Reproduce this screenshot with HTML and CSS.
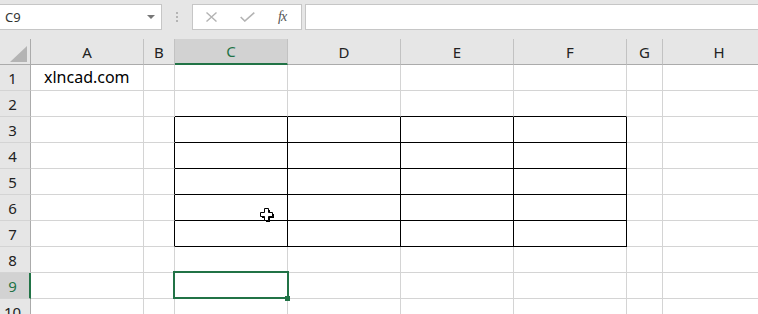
FILE: index.html
```html
<!DOCTYPE html>
<html lang="en">
<head>
    <meta charset="UTF-8">
    <title>Book1 - Excel</title>
    <link rel="stylesheet" href="styles.css">
</head>
<body>
    <!-- name box + formula bar -->
    <div class="toolbar">
        <div class="namebox"><span>C9</span><span class="caret"></span></div>
        <div class="grip"><i></i><i></i><i></i></div>
        <div class="fxbox">
            <svg class="ic-x" width="11" height="10" viewBox="0 0 11 10"><path d="M0.5 0.5 L10.5 9.5 M10.5 0.5 L0.5 9.5" stroke="#b3b3b3" stroke-width="1.4" fill="none"/></svg>
            <svg class="ic-ok" width="15" height="10" viewBox="0 0 15 10"><path d="M0.7 5 L4.8 9 L14.3 0.6" stroke="#b3b3b3" stroke-width="1.6" fill="none"/></svg>
            <span class="fx">fx</span>
        </div>
        <div class="formula"></div>
    </div>

    <div class="sheet">
        <div class="row head">
            <div class="corner"><span class="tri"></span></div>
            <div>A</div><div>B</div><div class="sel">C</div><div>D</div><div>E</div><div>F</div><div>G</div><div>H</div>
        </div>
        <div class="row">
            <div class="rh">1</div><div class="c txt">xlncad.com</div><div class="c"></div><div class="c"></div><div class="c"></div><div class="c"></div><div class="c"></div><div class="c"></div><div class="c"></div>
        </div>
        <div class="row">
            <div class="rh">2</div><div class="c"></div><div class="c"></div><div class="c bt"></div><div class="c bt"></div><div class="c bt"></div><div class="c bt"></div><div class="c"></div><div class="c"></div>
        </div>
        <div class="row">
            <div class="rh">3</div><div class="c"></div><div class="c bl"></div><div class="c bx"></div><div class="c bx"></div><div class="c bx"></div><div class="c bx"></div><div class="c"></div><div class="c"></div>
        </div>
        <div class="row">
            <div class="rh">4</div><div class="c"></div><div class="c bl"></div><div class="c bx"></div><div class="c bx"></div><div class="c bx"></div><div class="c bx"></div><div class="c"></div><div class="c"></div>
        </div>
        <div class="row">
            <div class="rh">5</div><div class="c"></div><div class="c bl"></div><div class="c bx"></div><div class="c bx"></div><div class="c bx"></div><div class="c bx"></div><div class="c"></div><div class="c"></div>
        </div>
        <div class="row">
            <div class="rh">6</div><div class="c"></div><div class="c bl"></div>
            <div class="c bx pointer">
                <svg class="cursor" width="17" height="17" viewBox="0 0 17 17">
                    <path d="M6 2 H10 V6 H14 V10 H10 V14 H6 V10 H2 V6 H6 Z" fill="#000" transform="translate(1 1)"/>
                    <path d="M5.5 1.5 H9.5 V5.5 H13.5 V9.5 H9.5 V13.5 H5.5 V9.5 H1.5 V5.5 H5.5 Z" fill="#fff" stroke="#000" stroke-width="1"/>
                </svg>
            </div>
            <div class="c bx"></div><div class="c bx"></div><div class="c bx"></div><div class="c"></div><div class="c"></div>
        </div>
        <div class="row">
            <div class="rh">7</div><div class="c"></div><div class="c bl"></div><div class="c bx"></div><div class="c bx"></div><div class="c bx"></div><div class="c bx"></div><div class="c"></div><div class="c"></div>
        </div>
        <div class="row">
            <div class="rh">8</div><div class="c"></div><div class="c"></div><div class="c"></div><div class="c"></div><div class="c"></div><div class="c"></div><div class="c"></div><div class="c"></div>
        </div>
        <div class="row">
            <div class="rh sel">9</div><div class="c"></div><div class="c"></div>
            <div class="c cur"><div class="selbox"><span class="handle"></span></div></div>
            <div class="c"></div><div class="c"></div><div class="c"></div><div class="c"></div><div class="c"></div>
        </div>
        <div class="row">
            <div class="rh">10</div><div class="c"></div><div class="c"></div><div class="c"></div><div class="c"></div><div class="c"></div><div class="c"></div><div class="c"></div><div class="c"></div>
        </div>
    </div>
</body>
</html>
```

FILE: styles.css
```css
body {
    margin: 0;
    width: 758px;
    height: 314px;
    overflow: hidden;
    background: #fff;
    font-family: "Noto Sans", "Open Sans", sans-serif;
}

/* top bar */
.toolbar {
    display: flex;
    align-items: flex-start;
    height: 39px;
    padding-top: 4px;
    box-sizing: border-box;
    background: #e6e6e6;
}
.namebox {
    width: 162px;
    height: 26px;
    box-sizing: border-box;
    background: #fff;
    border: 1px solid #c6c6c6;
    border-left: none;
    display: flex;
    align-items: center;
    justify-content: space-between;
    padding: 0 6px 0 5px;
    font-size: 13px;
    color: #333;
}
.caret {
    width: 0;
    height: 0;
    border-left: 4px solid transparent;
    border-right: 4px solid transparent;
    border-top: 4px solid #777;
}
.grip {
    display: flex;
    flex-direction: column;
    gap: 2px;
    margin: 8px 14px 0 14px;
}
.grip i {
    width: 2px;
    height: 2px;
    background: #b4b4b4;
}
.fxbox {
    width: 110px;
    height: 26px;
    box-sizing: border-box;
    background: #fff;
    border: 1px solid #c6c6c6;
    display: flex;
    align-items: center;
    padding-left: 13px;
}
.ic-ok {
    margin-left: 23px;
}
.fx {
    margin-left: 23px;
    font-family: "Liberation Serif", serif;
    font-style: italic;
    font-size: 14px;
    color: #555;
    letter-spacing: -1px;
}
.formula {
    flex: 1;
    height: 26px;
    box-sizing: border-box;
    margin-left: 3px;
    background: #fff;
    border: 1px solid #c6c6c6;
    border-right: none;
}

/* grid */
.sheet {
    overflow: hidden;
}
.row {
    display: grid;
    grid-template-columns: 31px 113px 31px 113px 113px 113px 113px 36px 113px;
    height: 26px;
}
.row > div {
    box-sizing: border-box;
    border-right: 1px solid #d4d4d4;
    border-bottom: 1px solid #d4d4d4;
}
.head {
    background: #e6e6e6;
}
.row.head > div {
    display: flex;
    align-items: center;
    justify-content: center;
    font-size: 15px;
    color: #222;
    border-right-color: #c2c2c2;
    border-bottom-color: #ababab;
}
.row.head > .corner {
    align-items: flex-end;
    justify-content: flex-end;
    padding: 0 3px 2px 0;
    border-right-color: #ababab;
}
.tri {
    width: 0;
    height: 0;
    border-left: 17px solid transparent;
    border-bottom: 16px solid #b4b4b4;
}
.row.head > .sel {
    background: #d2d2d2;
    color: #217346;
    border-bottom: 2px solid #217346;
}
.row > .rh {
    background: #e6e6e6;
    border-right-color: #ababab;
    display: flex;
    align-items: center;
    justify-content: center;
    padding-right: 5px;
    font-size: 15px;
    color: #222;
}
.row > .rh.sel {
    background: #d2d2d2;
    color: #217346;
    border-right: 2px solid #217346;
    padding-right: 4px;
}
.txt {
    padding-left: 13px;
    font-size: 16px;
    line-height: 25px;
    color: #000;
    white-space: nowrap;
}

/* table borders C3:F7 */
.row > .bt {
    border-bottom-color: #000;
}
.row > .bl {
    border-right-color: #000;
}
.row > .bx {
    border-right-color: #000;
    border-bottom-color: #000;
}

/* active cell */
.cur,
.pointer {
    position: relative;
}
.selbox {
    position: absolute;
    left: -2px;
    top: -2px;
    width: 116px;
    height: 28px;
    box-sizing: border-box;
    border: 2px solid #217346;
}
.handle {
    position: absolute;
    right: -3px;
    bottom: -4px;
    width: 5px;
    height: 5px;
    background: #217346;
}
.cursor {
    position: absolute;
    left: 84px;
    top: 12px;
}
```
